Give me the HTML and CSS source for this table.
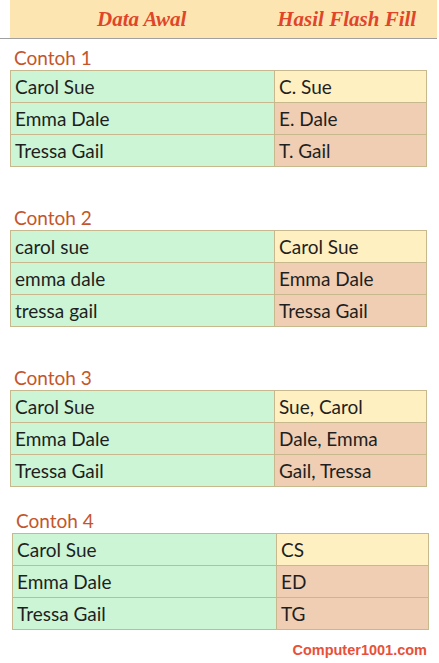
FILE: index.html
```html
<!DOCTYPE html>
<html>
<head>
<meta charset="utf-8">
<link rel="stylesheet" href="styles.css">
</head>
<body>
<div class="top">
  <div class="band">
    <span class="h1">Data Awal</span>
    <span class="h2">Hasil Flash Fill</span>
  </div>
</div>

<section class="ex">
  <div class="title">Contoh 1</div>
  <table class="grid">
    <tr><td class="a">Carol Sue</td><td class="b first">C. Sue</td></tr>
    <tr><td class="a">Emma Dale</td><td class="b">E. Dale</td></tr>
    <tr><td class="a">Tressa Gail</td><td class="b">T. Gail</td></tr>
  </table>
</section>

<section class="ex">
  <div class="title">Contoh 2</div>
  <table class="grid">
    <tr><td class="a">carol sue</td><td class="b first">Carol Sue</td></tr>
    <tr><td class="a">emma dale</td><td class="b">Emma Dale</td></tr>
    <tr><td class="a">tressa gail</td><td class="b">Tressa Gail</td></tr>
  </table>
</section>

<section class="ex">
  <div class="title">Contoh 3</div>
  <table class="grid">
    <tr><td class="a">Carol Sue</td><td class="b first">Sue, Carol</td></tr>
    <tr><td class="a">Emma Dale</td><td class="b">Dale, Emma</td></tr>
    <tr><td class="a">Tressa Gail</td><td class="b">Gail, Tressa</td></tr>
  </table>
</section>

<section class="ex ex4">
  <div class="title">Contoh 4</div>
  <table class="grid">
    <tr><td class="a">Carol Sue</td><td class="b first">CS</td></tr>
    <tr><td class="a">Emma Dale</td><td class="b">ED</td></tr>
    <tr><td class="a">Tressa Gail</td><td class="b">TG</td></tr>
  </table>
</section>

<div class="credit">Computer1001.com</div>
</body>
</html>
```

FILE: styles.css
```css
html, body {
  margin: 0;
  padding: 0;
  background: #ffffff;
}
body {
  width: 439px;
  font-family: Lato, "Open Sans", sans-serif;
  color: #1f1f1f;
}
.top {
  width: 437px;
  border-bottom: 1px solid #a0a0a0;
}
.band {
  margin-left: 10px;
  height: 38px;
  background: #fde5b1;
  font-family: "Liberation Serif", serif;
  font-weight: bold;
  font-style: italic;
  font-size: 21px;
  line-height: 38px;
  color: #e0452a;
  display: flex;
  align-items: center;
}
.h1 {
  margin-left: 87px;
}
.h2 {
  margin-left: 91px;
}
.ex {
  padding-left: 10px;
  margin-top: 6px;
}
.ex + .ex {
  margin-top: 38px;
}
.ex.ex4 {
  padding-left: 12px;
  margin-top: 21px;
}
.title {
  font-size: 19px;
  line-height: 25px;
  color: #c4552b;
  padding-left: 4px;
}
.grid {
  border-collapse: collapse;
  width: 417px;
}
.grid td {
  height: 31px;
  padding: 0 0 0 4px;
  border: 1px solid #c8b88e;
  font-size: 19px;
  line-height: 31px;
  box-sizing: border-box;
}
.grid td.a {
  width: 264px;
  background: #ccf5d6;
}
.grid td.b {
  background: #efceb3;
}
.grid td.b.first {
  background: #fff0c1;
}
.credit {
  margin-top: 12px;
  width: 427px;
  text-align: right;
  font-family: "Liberation Sans", Arial, sans-serif;
  font-weight: bold;
  font-size: 14.5px;
  line-height: 16px;
  color: #e8503a;
}
```
